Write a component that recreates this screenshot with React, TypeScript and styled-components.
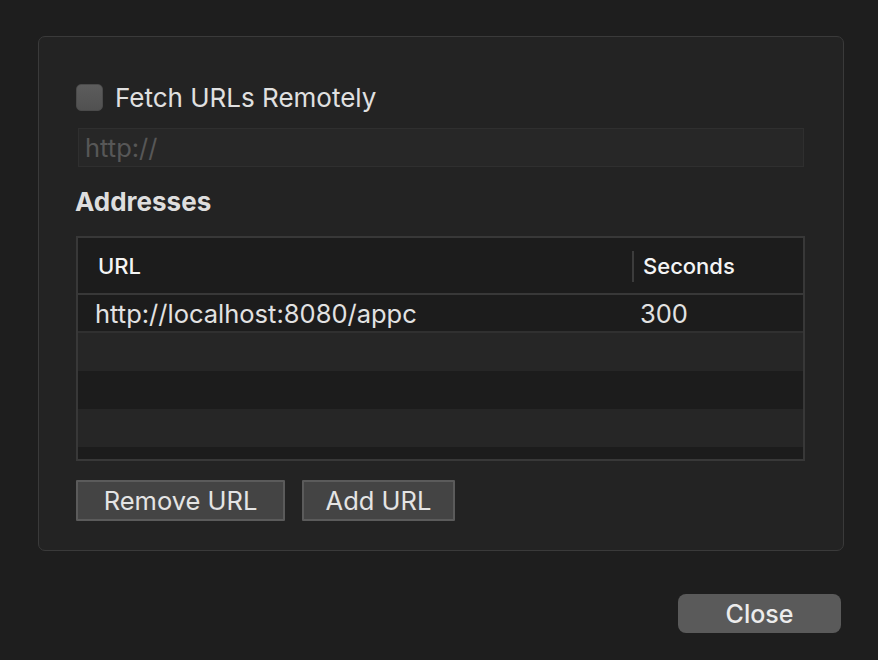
import React from 'react';
import styled, { createGlobalStyle } from 'styled-components';

const GlobalStyle = createGlobalStyle`
  html, body {
    margin: 0;
    padding: 0;
    background: #1e1e1e;
  }
  #root {
    width: 878px;
    height: 660px;
  }
`;

const Window = styled.div`
  width: 878px;
  height: 660px;
  box-sizing: border-box;
  background: #1e1e1e;
  padding: 36px 34px 0 38px;
  display: flex;
  flex-direction: column;
  font-family: Inter, "Noto Sans", sans-serif;
  color: #dedede;
  overflow: hidden;
`;

const Panel = styled.div`
  width: 806px;
  height: 515px;
  box-sizing: border-box;
  border: 1px solid #3a3a3a;
  border-radius: 7px;
  background: #232323;
  padding: 46px 38px 0 37px;
  display: flex;
  flex-direction: column;
`;

const CheckRow = styled.label`
  display: flex;
  align-items: center;
  gap: 12px;
  height: 28px;
  font-size: 26px;
  color: #e0e0e0;
`;

const Checkbox = styled.span`
  width: 27px;
  height: 27px;
  box-sizing: border-box;
  border-radius: 5px;
  background: linear-gradient(#5c5c5c, #515151);
  border: 1px solid #4a4a4a;
`;

const UrlField = styled.input`
  margin: 17px 0 0 2px;
  width: 726px;
  height: 39px;
  box-sizing: border-box;
  background: #272727;
  border: 1px solid #2f2f2f;
  padding: 0 6px;
  font-family: inherit;
  font-size: 25.5px;
  color: #e0e0e0;
  outline: none;
  &::placeholder {
    color: #575757;
  }
`;

const Heading = styled.div`
  margin-top: 21px;
  margin-left: -1px;
  height: 28px;
  line-height: 28px;
  font-size: 26px;
  font-weight: 700;
  color: #dedede;
`;

const Table = styled.div`
  margin-top: 20px;
  width: 729px;
  height: 225px;
  box-sizing: border-box;
  border: 2px solid #383838;
  background: #1c1c1c;
  display: flex;
  flex-direction: column;
  overflow: hidden;
`;

const HeaderRow = styled.div`
  display: grid;
  grid-template-columns: 554px 1fr;
  height: 55px;
  flex: none;
  align-items: center;
  border-bottom: 2px solid #383838;
  background: #1c1c1c;
`;

const HeaderCell = styled.div<{ $divider?: boolean }>`
  height: 100%;
  display: flex;
  align-items: center;
  padding-left: ${p => (p.$divider ? '11px' : '20px')};
  font-size: 22px;
  font-weight: 500;
  color: #f4f4f4;
  position: relative;
  &::before {
    content: '';
    display: ${p => (p.$divider ? 'block' : 'none')};
    position: absolute;
    left: 0;
    top: 13px;
    bottom: 11px;
    width: 2px;
    background: #3c3c3c;
  }
`;

const Row = styled.div<{ $alt?: boolean; $line?: boolean }>`
  display: grid;
  grid-template-columns: 554px 1fr;
  height: ${p => (p.$line ? '36px' : '38px')};
  flex: none;
  align-items: center;
  background: ${p => (p.$alt ? '#262626' : '#1c1c1c')};
  border-bottom: ${p => (p.$line ? '2px solid #303030' : 'none')};
  font-size: 25.5px;
  color: #e2e2e2;
`;

const Cell = styled.div<{ $first?: boolean }>`
  padding-left: ${p => (p.$first ? '17px' : '8px')};
  white-space: nowrap;
`;

const ButtonRow = styled.div`
  margin-top: 19px;
  display: flex;
  gap: 17px;
`;

const PushButton = styled.button<{ $w: number }>`
  width: ${p => p.$w}px;
  height: 41px;
  box-sizing: border-box;
  background: #444444;
  border: 2px solid #5b5b5b;
  border-radius: 1px;
  font-family: inherit;
  font-size: 25.5px;
  color: #e4e4e4;
  padding: 0;
`;

const Footer = styled.div`
  display: flex;
  justify-content: flex-end;
  margin-top: 43px;
  padding-right: 3px;
`;

const CloseButton = styled.button`
  width: 163px;
  height: 39px;
  border: none;
  border-radius: 8px;
  background: #5a5a5a;
  font-family: inherit;
  font-size: 25px;
  font-weight: 500;
  color: #ececec;
  padding: 0;
`;

const addresses = [{ url: 'http://localhost:8080/appc', seconds: 300 }];

export default function App() {
  const emptyRows = 4;
  return (
    <Window>
      <GlobalStyle />
      <Panel>
        <CheckRow>
          <Checkbox />
          Fetch URLs Remotely
        </CheckRow>
        <UrlField placeholder="http://" />
        <Heading>Addresses</Heading>
        <Table>
          <HeaderRow>
            <HeaderCell>URL</HeaderCell>
            <HeaderCell $divider>Seconds</HeaderCell>
          </HeaderRow>
          {addresses.map(a => (
            <Row key={a.url} $line>
              <Cell $first>{a.url}</Cell>
              <Cell>{a.seconds}</Cell>
            </Row>
          ))}
          {Array.from({ length: emptyRows }).map((_, i) => (
            <Row key={i} $alt={i % 2 === 0} />
          ))}
        </Table>
        <ButtonRow>
          <PushButton $w={209}>Remove URL</PushButton>
          <PushButton $w={153}>Add URL</PushButton>
        </ButtonRow>
      </Panel>
      <Footer>
        <CloseButton>Close</CloseButton>
      </Footer>
    </Window>
  );
}
